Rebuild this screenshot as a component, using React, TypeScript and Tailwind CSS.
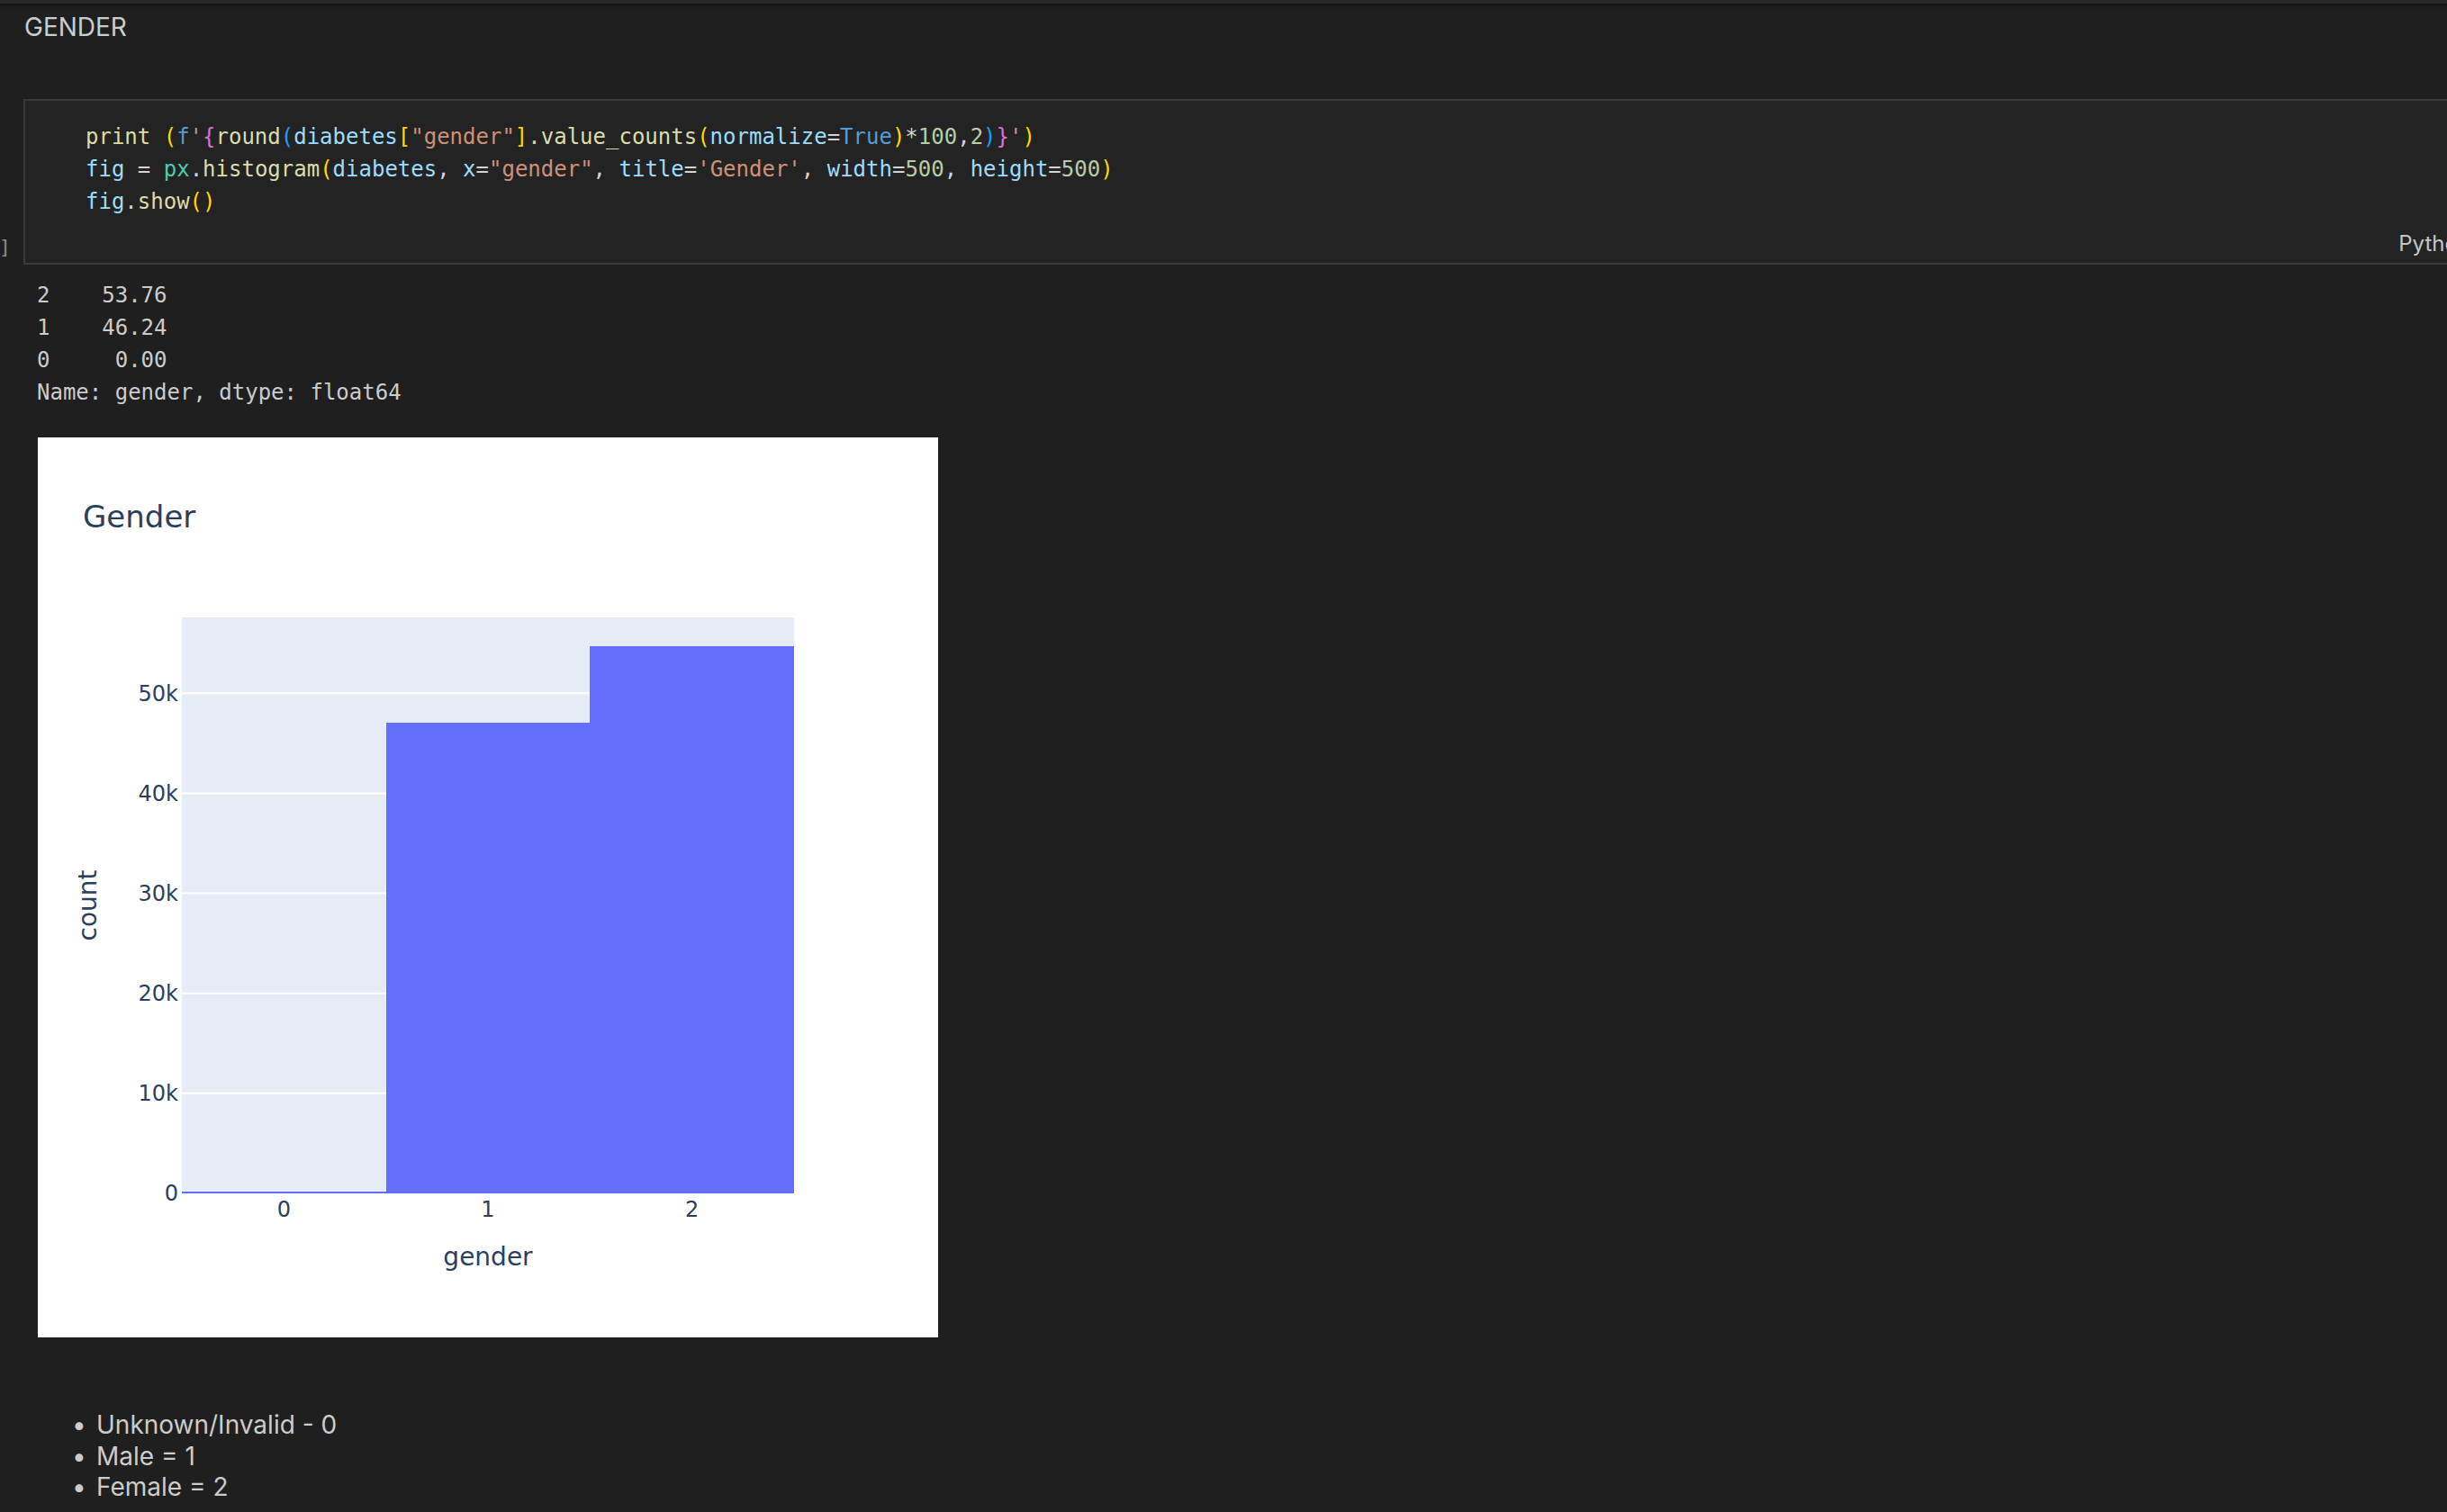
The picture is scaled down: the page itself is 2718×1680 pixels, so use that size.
import React from "react";

const tone: Record<string, string> = {
  fn: "text-[#dcdcaa]",
  v: "text-[#9cdcfe]",
  s: "text-[#ce9178]",
  kw: "text-[#569cd6]",
  n: "text-[#b5cea8]",
  p: "text-[#d4d4d4]",
  cl: "text-[#4ec9b0]",
  b1: "text-[#ffd700]",
  b2: "text-[#da70d6]",
  b3: "text-[#179fff]",
};

const code: [string, string][][] = [
  [
    ["print", "fn"], [" ", "p"], ["(", "b1"], ["f", "kw"], ["'", "s"], ["{", "b2"],
    ["round", "fn"], ["(", "b3"], ["diabetes", "v"], ["[", "b1"], ['"gender"', "s"],
    ["]", "b1"], [".", "p"], ["value_counts", "fn"], ["(", "b1"], ["normalize", "v"],
    ["=", "p"], ["True", "kw"], [")", "b1"], ["*", "p"], ["100", "n"], [",", "p"],
    ["2", "n"], [")", "b3"], ["}", "b2"], ["'", "s"], [")", "b1"],
  ],
  [
    ["fig", "v"], [" = ", "p"], ["px", "cl"], [".", "p"], ["histogram", "fn"], ["(", "b1"],
    ["diabetes", "v"], [", ", "p"], ["x", "v"], ["=", "p"], ['"gender"', "s"], [", ", "p"],
    ["title", "v"], ["=", "p"], ["'Gender'", "s"], [", ", "p"], ["width", "v"], ["=", "p"],
    ["500", "n"], [", ", "p"], ["height", "v"], ["=", "p"], ["500", "n"], [")", "b1"],
  ],
  [["fig", "v"], [".", "p"], ["show", "fn"], ["()", "b1"]],
];

const output = ["2    53.76", "1    46.24", "0     0.00", "Name: gender, dtype: float64"];

// plotly geometry, in device pixels (500x500 figure at 2x)
const X0 = 160;
const X1 = 840;
const Y0 = 840;
const Y1 = 200;
const yMax = 57587;
const yAt = (v: number) => Y0 - (v / yMax) * (Y0 - Y1);
const binW = (X1 - X0) / 3;
const counts = [3, 47055, 54708];
const ticks = [0, 10000, 20000, 30000, 40000, 50000];

function GenderChart() {
  const font = "DejaVu Sans, Verdana, sans-serif";
  // one outline for the three adjacent bins, so no seam shows between them
  const tops = counts.map((c) => Math.round(Math.min(yAt(c), Y0 - 2)));
  const xs = [0, 1, 2, 3].map((i) => Math.round(X0 + i * binW));
  const d =
    `M${xs[0]} ${Y0} V${tops[0]} H${xs[1]} V${tops[1]} H${xs[2]} V${tops[2]} H${xs[3]} V${Y0} Z`;
  return (
    <svg width={1000} height={1000} viewBox="0 0 1000 1000" className="block">
      <rect x={X0} y={Y1} width={X1 - X0} height={Y0 - Y1} fill="#e5ecf6" />
      {ticks.slice(1).map((t) => (
        <line key={t} x1={X0} x2={X1} y1={yAt(t)} y2={yAt(t)} stroke="#fff" strokeWidth={2} />
      ))}
      <path d={d} fill="#636efa" shapeRendering="crispEdges" />
      {ticks.map((t) => (
        <text key={t} x={156} y={yAt(t) + 8.4} textAnchor="end" fontSize={24} fill="#2a3f5f" fontFamily={font}>
          {t === 0 ? "0" : `${t / 1000}k`}
        </text>
      ))}
      {[0, 1, 2].map((i) => (
        <text key={i} x={X0 + binW * (i + 0.5)} y={866} textAnchor="middle" fontSize={24} fill="#2a3f5f" fontFamily={font}>
          {i}
        </text>
      ))}
      <text x={500} y={920} textAnchor="middle" fontSize={28} fill="#2a3f5f" fontFamily={font}>
        gender
      </text>
      <text x={65} y={520} textAnchor="middle" fontSize={28} fill="#2a3f5f" fontFamily={font} transform="rotate(-90 65 520)">
        count
      </text>
      <text x={50} y={100} fontSize={34} fill="#2a3f5f" fontFamily={font}>
        Gender
      </text>
    </svg>
  );
}

export default function App() {
  return (
    <div className="min-h-screen w-full overflow-hidden bg-[#1f1f1f] text-[#cccccc] font-['Inter','Liberation_Sans',sans-serif]">
      <div className="h-[4px] bg-[#282828]" />
      <div className="h-[6px] bg-linear-to-b from-[#151515] to-[#1f1f1f]" />

      {/* markdown heading */}
      <div className="pl-[27px] pt-[2px] text-[28px] leading-[36px]">GENDER</div>

      {/* code cell */}
      <div className="relative mt-[62px] ml-[26px] w-[2790px] border-2 border-[#3a3a3e] bg-[#232323]">
        <span className="absolute right-full mr-[16px] top-[148px] text-[22px] leading-[30px] text-[#8a8a8a] font-['DejaVu_Sans_Mono',monospace]">
          [0]
        </span>
        <div className="pt-[22px] pl-[67px] text-[24px] leading-[36px] whitespace-pre font-['DejaVu_Sans_Mono',monospace]">
          {code.map((line, i) => (
            <div key={i}>
              {line.map(([t, k], j) => (
                <span key={j} className={tone[k]}>
                  {t}
                </span>
              ))}
            </div>
          ))}
        </div>
        <div className="flex h-[50px] justify-end pt-[14px] pr-[70px] text-[24px] leading-[30px] text-[#c5c5c5]">
          Python
        </div>
      </div>

      {/* output */}
      <div className="mt-[16px] pl-[41px] text-[24px] leading-[36px] whitespace-pre text-[#cccccc] font-['DejaVu_Sans_Mono',monospace]">
        {output.map((l) => (
          <div key={l}>{l}</div>
        ))}
      </div>

      <div className="mt-[32px] ml-[42px] w-[1000px] h-[1000px] bg-white">
        <GenderChart />
      </div>

      {/* markdown list */}
      <div className="mt-[80px] pl-[80px] text-[28px] leading-[34.5px] pb-[20px]">
        {["Unknown/Invalid - 0", "Male = 1", "Female = 2"].map((t) => (
          <div key={t} className="flex">
            <span className="w-[27px]">•</span>
            <span>{t}</span>
          </div>
        ))}
      </div>
    </div>
  );
}
